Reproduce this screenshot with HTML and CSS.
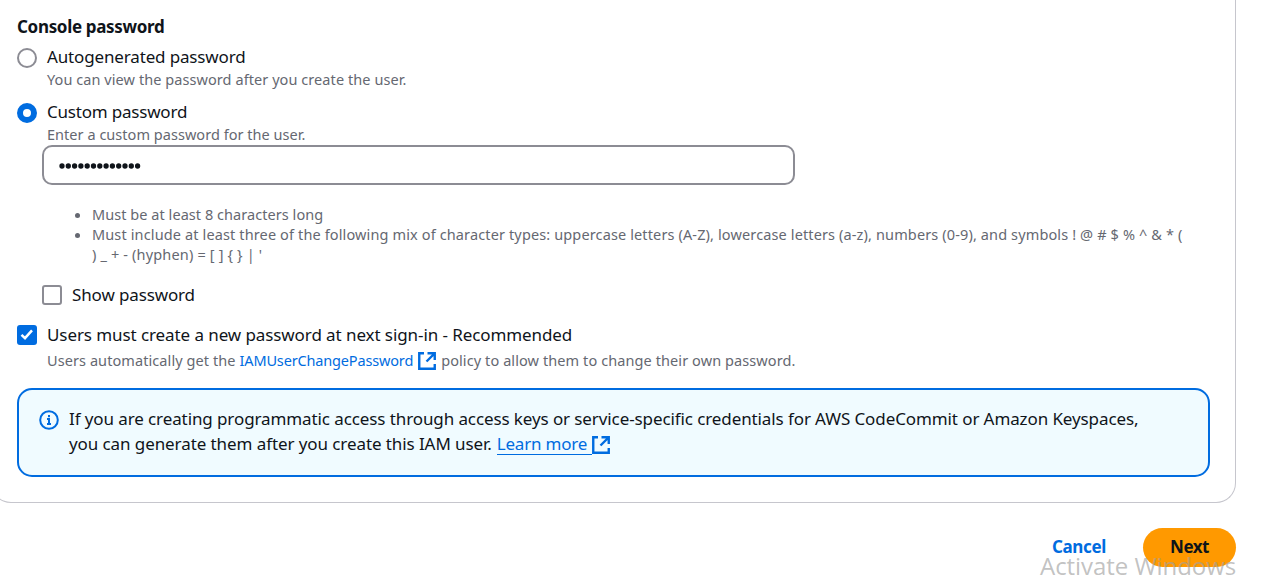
FILE: index.html
```html
<!DOCTYPE html>
<html lang="en">
<head>
<meta charset="utf-8">
<title>Create user</title>
<link rel="stylesheet" href="styles.css">
</head>
<body>
<main class="card">
  <h3 class="heading"><span class="t-heading">Console password</span></h3>
  <label class="option">
    <span class="radio"></span>
    <span class="option-body"><span class="label"><span class="t-auto">Autogenerated password</span></span><span class="hint"><span class="t-view">You can view the password after you create the user.</span></span></span>
  </label>
  <label class="option option-custom">
    <span class="radio radio-on"></span>
    <span class="option-body"><span class="label"><span class="t-custom">Custom password</span></span><span class="hint"><span class="t-enter">Enter a custom password for the user.</span></span></span>
  </label>
  <div class="custom">
    <div class="field"><svg class="dots" viewBox="0 0 82 6"><path d="M3 3H80"/></svg></div>
    <ul class="rules">
      <li><span class="t-least">Must be at least 8 characters long</span></li>
      <li><span class="t-mix">Must include at least three of the following mix of character types: uppercase letters (A-Z), lowercase letters (a-z), numbers (0-9), and symbols ! @ # $ % ^ &amp; * (</span><br><span class="t-mix2">) _ + - (hyphen) = [ ] { } | '</span></li>
    </ul>
    <label class="check"><span class="box"></span><span class="label"><span class="t-show">Show password</span></span></label>
  </div>
  <label class="check check-reset">
    <span class="box box-on"><svg viewBox="0 0 20 20"><path d="M4.500 9.800 8 13.200 15 5.400"/></svg></span>
    <span class="label"><span class="t-reset">Users must create a new password at next sign-in - Recommended</span></span>
  </label>
  <div class="policy"><span class="t-get">Users automatically get the</span><a class="policy-link"><span class="t-iam">IAMUserChangePassword</span><svg class="ext" viewBox="0 0 18 18"><path d="M6 1.250H1.250v15.500h15.500V12M9.500 1.250h7.250V8M16.500 1.500 8.500 9.500"/></svg></a><span class="t-policy">policy to allow them to change their own password.</span></div>
  <section class="alert">
    <svg class="info" viewBox="0 0 20 20"><circle cx="10" cy="10" r="8.800"/><path d="M8 9h2v5.500M8 14h4M10 5v2.200"/></svg>
    <div class="alert-text">
      <div class="line"><span class="t-if">If you are creating programmatic access through access keys or service-specific credentials for AWS CodeCommit or Amazon Keyspaces,</span></div>
      <div class="line"><span class="t-gen">you can generate them after you create this IAM user.</span><a class="learn"><span class="t-learn">Learn more</span></a><svg class="ext" viewBox="0 0 18 18"><path d="M6 1.250H1.250v15.500h15.500V12M9.500 1.250h7.250V8M16.500 1.500 8.500 9.500"/></svg></div>
    </div>
  </section>
</main>
<footer class="actions"><a class="cancel"><span class="t-cancel">Cancel</span></a><button class="next"><span class="t-next">Next</span></button></footer>
<div class="watermark">Activate Windows</div>
</body>
</html>
```
FILE: styles.css
```css
* { box-sizing: border-box; }
body { margin: 0; height: 576px; overflow: hidden; background: #fff; color: #0f141a; font: 17px/25px "Noto Sans", sans-serif; }
[class^="t-"] { white-space: nowrap; }
.t-heading { letter-spacing: -.32px; }
.t-auto { letter-spacing: -.15px; }
.t-view { letter-spacing: .07px; }
.t-custom { letter-spacing: -.2px; }
.t-enter { letter-spacing: .035px; }
.t-least { letter-spacing: .05px; }
.t-mix { letter-spacing: .13px; }
.t-mix2 { letter-spacing: .16px; }
.t-show { letter-spacing: -.13px; }
.t-reset { letter-spacing: -.085px; }
.t-get { letter-spacing: .08px; }
.t-iam { letter-spacing: -.16px; }
.t-policy { letter-spacing: .09px; }
.t-if { letter-spacing: -.1px; }
.t-gen { letter-spacing: -.085px; }
.t-learn { letter-spacing: -.2px; }
.t-cancel { letter-spacing: -.35px; }
.t-next { letter-spacing: -.5px; }
svg { fill: none; stroke: #006ce0; stroke-width: 2; flex: none; }
.card { margin-left: -9px; width: 1245px; height: 503px; padding: 14px 25px 0; border: 1px solid #c6c6cd; border-top: 0; border-radius: 0 0 20px 20px; }
.heading { margin: 0 0 5px; font-size: 17px; line-height: 25px; font-weight: 700; }
.option { display: flex; gap: 10px; height: 45px; }
.option-custom { margin-top: 10px; }
.option-body, .label, .hint { display: block; }
.hint, .rules, .policy { color: #656871; font-size: 14.500px; line-height: 20px; }
.radio { width: 20px; height: 20px; margin-top: 4px; border: 2px solid #8c8c94; border-radius: 50%; }
.radio-on { border: 6px solid #006ce0; }
.custom { padding-left: 25px; }
.field { display: flex; align-items: center; width: 753px; height: 40px; margin-top: 1px; padding: 2px 14.500px 0; border: 2px solid #8c8c94; border-radius: 10px; }
.dots { width: 82px; height: 6px; stroke: #0f141a; stroke-width: 5.300; stroke-linecap: round; stroke-dasharray: 0 6.300; }
.rules { margin: 19px 0 18px; padding-left: 50px; }
.check { display: flex; align-items: center; gap: 10px; height: 25px; }
.check-reset { margin-top: 15px; }
.box { width: 20px; height: 20px; border: 2px solid #8c8c94; border-radius: 3px; }
.box-on { border: 0; background: #006ce0; }
.box-on svg { display: block; width: 20px; height: 20px; stroke: #fff; stroke-width: 2.500; }
.policy { display: flex; align-items: center; height: 20px; margin: 3px 0 18px; padding-left: 30px; }
.policy-link { display: flex; align-items: center; gap: 5px; margin: 0 5px 0 4px; color: #006ce0; }
.ext { width: 18px; height: 18px; margin-top: 2px; stroke-width: 2.400; }
.alert { display: flex; gap: 10px; height: 89px; padding: 16px 20px; border: 2px solid #006ce0; border-radius: 15px; background: #f0fbff; }
.info { width: 20px; height: 20px; margin-top: 4px; }
.line { display: flex; align-items: center; height: 25px; }
.learn { height: 23px; line-height: 23px; margin: 0 0 0 5px; padding-right: 5px; border-bottom: 1px solid #006ce0; color: #006ce0; }
.actions { display: flex; justify-content: flex-end; align-items: center; margin: 25px 34px 0 0; font-weight: 700; }
.cancel { margin-right: 37px; padding-bottom: 2px; color: #006ce0; }
.next { width: 93px; height: 39px; padding: 0 0 2px; border: 0; border-radius: 20px; background: #ff9900; color: #0f141a; font: inherit; }
.watermark { position: absolute; left: 1040px; top: 550px; font: 24px/32px "Open Sans", sans-serif; color: rgba(160,160,160,.65); letter-spacing: -.05px; }
```
